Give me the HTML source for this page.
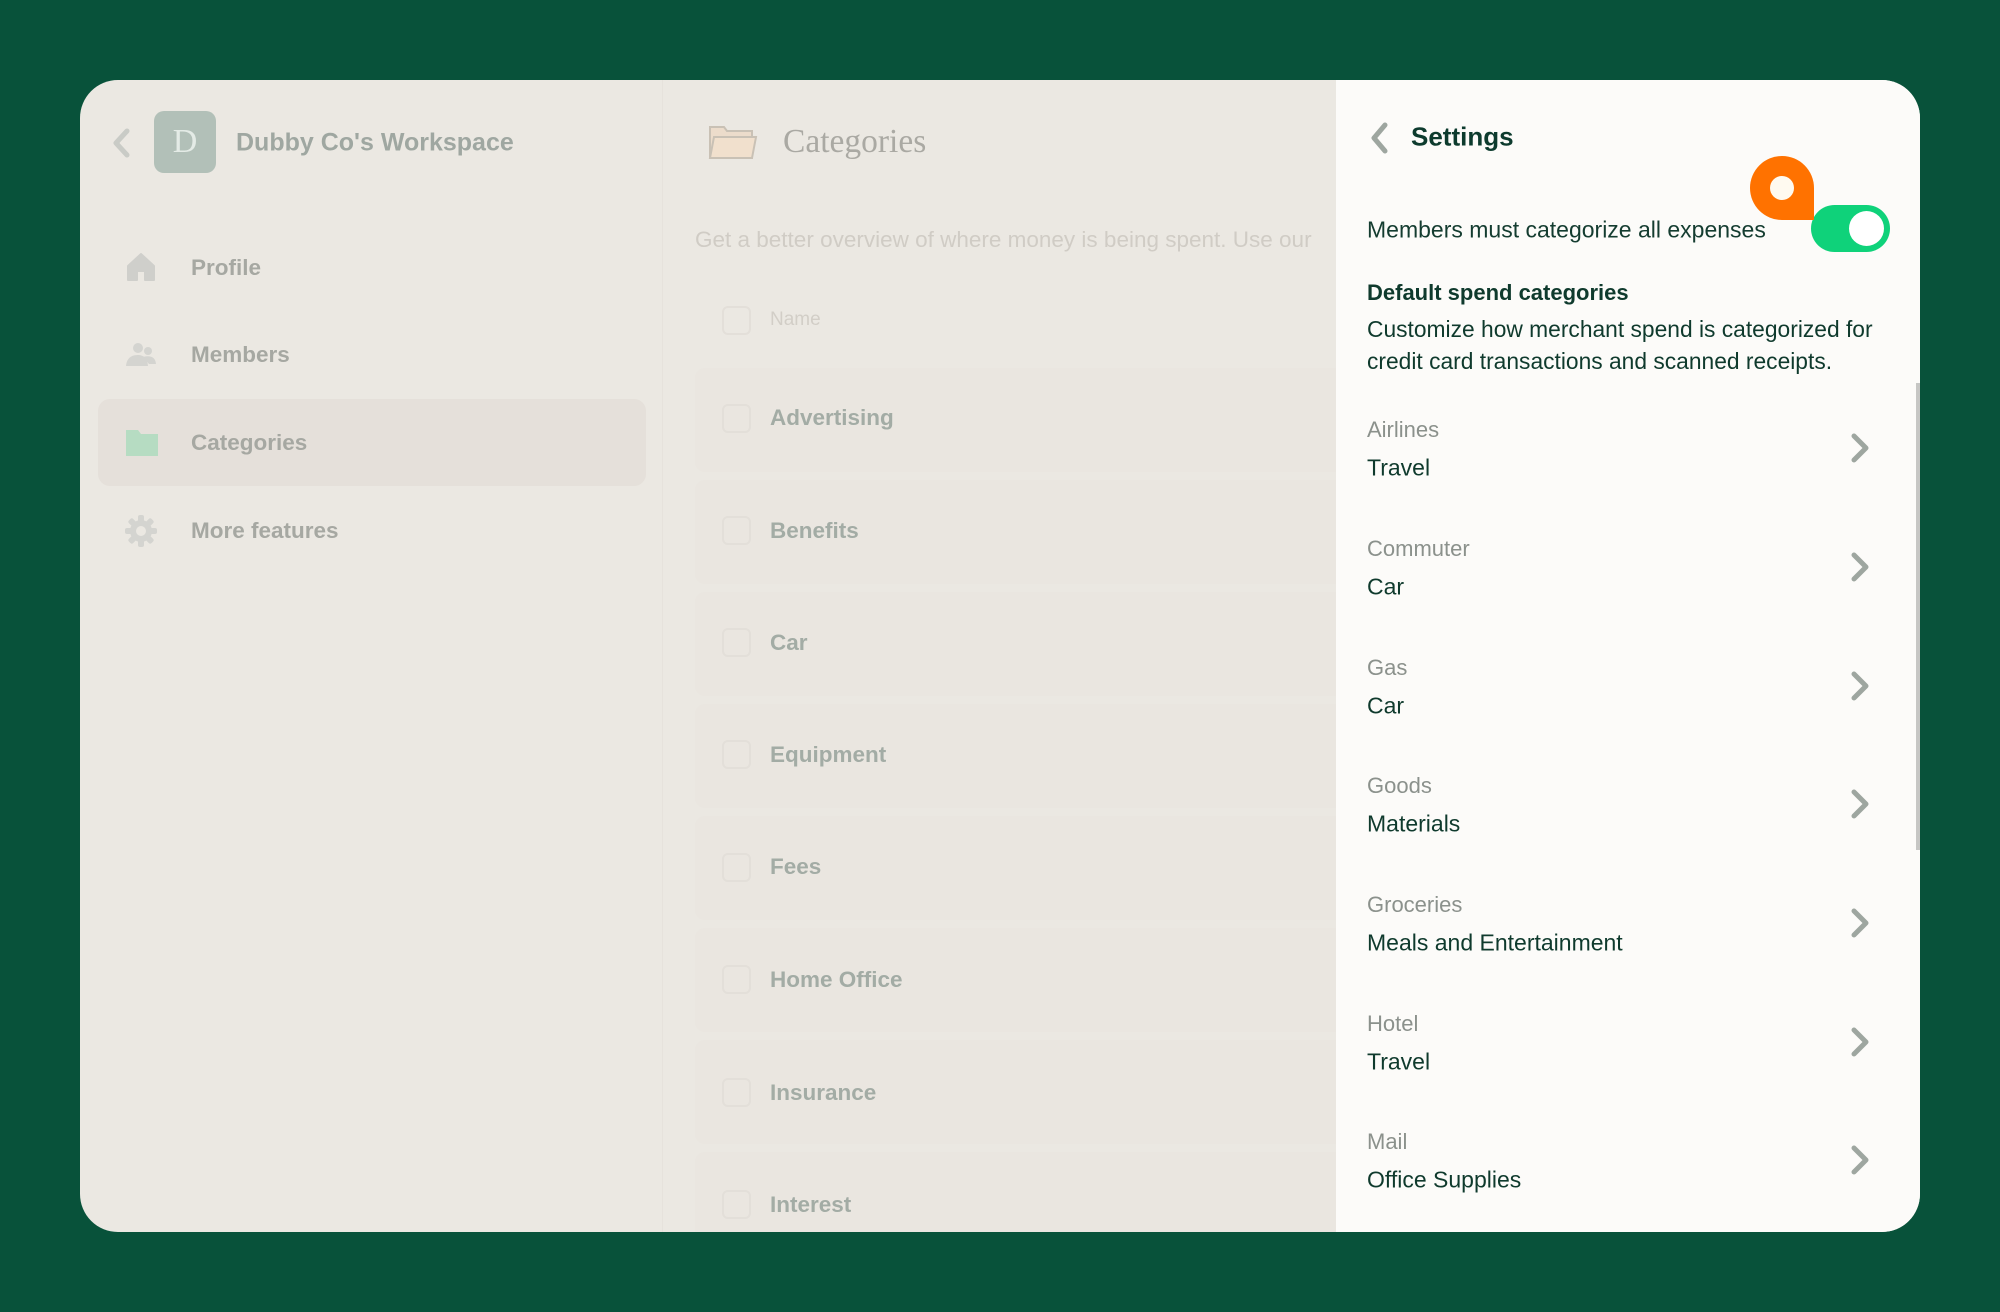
<!DOCTYPE html>
<html><head><meta charset="utf-8"><style>
*{box-sizing:border-box;margin:0;padding:0}
body{width:2000px;height:1312px;background:#08523a;font-family:"Liberation Sans",sans-serif;position:relative;overflow:hidden}
.card{position:absolute;left:80px;top:80px;width:1840px;height:1152px;border-radius:38px;overflow:hidden;background:#ebe8e2}
.side{position:absolute;left:0;top:0;width:583px;height:1152px;border-right:1px solid #e6e2dc}
.abs{position:absolute}
.nav{position:absolute;left:111px;font-size:22.5px;font-weight:bold;color:#a6a8a2;transform:translateY(-50%)}
.mid{position:absolute;left:583px;top:0;width:673px;height:1152px}
.row{position:absolute;left:32px;width:660px;height:104px;background:#eae6e0;border-radius:10px}
.cb{position:absolute;left:59px;width:29px;height:29px;border:2px solid #e3dfd9;border-radius:6px}
.rl{position:absolute;left:107px;font-size:22.5px;font-weight:bold;color:#a3aca5;transform:translateY(-50%)}
.right{position:absolute;left:1256px;top:0;width:584px;height:1152px;background:#fcfbf9}
.lab{position:absolute;left:31px;font-size:22px;color:#8b918c;transform:translateY(-50%)}
.val{position:absolute;left:31px;font-size:23px;color:#0f3a2d;transform:translateY(-50%)}
.chev{position:absolute;left:512px}
</style></head><body>
<div class="card">
 <div class="side">
  <svg class="abs" style="left:30px;top:48px" width="22" height="30"><path d="M17 3 L6 15 L17 27" stroke="#c9cbc6" stroke-width="5" fill="none" stroke-linecap="round" stroke-linejoin="round"/></svg>
  <div class="abs" style="left:74px;top:31px;width:62px;height:62px;border-radius:10px;background:#b2c0b8;color:#e4ebe6;font-family:'Liberation Serif',serif;font-size:34px;text-align:center;line-height:62px">D</div>
  <div class="abs" style="left:156px;top:63px;transform:translateY(-50%);font-size:25px;font-weight:bold;color:#9fa7a1">Dubby Co's Workspace</div>
  <svg class="abs" style="left:46px;top:172px" width="30" height="30"><path d="M2 14 L15 2 L28 14 V28 H19 V19 H11 V28 H2Z" fill="#cfcfcb" stroke="#cfcfcb" stroke-width="2" stroke-linejoin="round"/></svg>
  <div class="nav" style="top:188px">Profile</div>
  <svg class="abs" style="left:45px;top:262px" width="32" height="26"><circle cx="13" cy="6" r="5" fill="#d4d4d0"/><circle cx="23" cy="9" r="4" fill="#d4d4d0"/><path d="M1 24 Q2 13 13 13 Q22 13 23 24Z" fill="#d4d4d0"/><path d="M18 15 Q30 12 31 22 H24Z" fill="#d4d4d0"/></svg>
  <div class="nav" style="top:275px">Members</div>
  <div class="abs" style="left:18px;top:319px;width:548px;height:87px;border-radius:12px;background:#e5e0da"></div>
  <svg class="abs" style="left:46px;top:350px" width="32" height="26"><path d="M0 0 H12 L15 4 H32 V26 H0Z" fill="#b6dcc2"/></svg>
  <div class="nav" style="top:363px">Categories</div>
  <svg class="abs" style="left:45px;top:435px" width="32" height="32" viewBox="0 0 32 32"><g fill="#d4d4d0"><circle cx="16" cy="16" r="11"/><rect x="13" y="0" width="6" height="32" rx="2"/><rect x="13" y="0" width="6" height="32" rx="2" transform="rotate(45 16 16)"/><rect x="13" y="0" width="6" height="32" rx="2" transform="rotate(90 16 16)"/><rect x="13" y="0" width="6" height="32" rx="2" transform="rotate(135 16 16)"/></g><circle cx="16" cy="16" r="5" fill="#ebe8e2"/></svg>
  <div class="nav" style="top:451px">More features</div>
 </div>
 <div class="mid">
  <svg class="abs" style="left:45px;top:45px" width="50" height="36"><path d="M2 2 H16 L19 6 H44 V33 H2Z" fill="#ecdccb" stroke="#c9c1b5" stroke-width="2"/><path d="M2 33 L6 12 H48 L44 33Z" fill="#f1e0cd" stroke="#c9c1b5" stroke-width="2"/></svg>
  <div class="abs" style="left:120px;top:62px;transform:translateY(-50%);font-family:'Liberation Serif',serif;font-size:33.5px;color:#aaa9a3">Categories</div>
  <div class="abs" style="left:32px;top:160px;transform:translateY(-50%);font-size:22.5px;color:#d0ccc5;white-space:nowrap">Get a better overview of where money is being spent. Use our</div>
  <div class="cb" style="top:226px"></div>
  <div class="abs" style="left:107px;top:240px;transform:translateY(-50%);font-size:19px;color:#d2cec7">Name</div>
  <div class="row" style="top:288px"></div><div class="cb" style="top:324px"></div><div class="rl" style="top:338px">Advertising</div>
  <div class="row" style="top:400px"></div><div class="cb" style="top:436px"></div><div class="rl" style="top:451px">Benefits</div>
  <div class="row" style="top:512px"></div><div class="cb" style="top:548px"></div><div class="rl" style="top:563px">Car</div>
  <div class="row" style="top:624px"></div><div class="cb" style="top:660px"></div><div class="rl" style="top:675px">Equipment</div>
  <div class="row" style="top:736px"></div><div class="cb" style="top:773px"></div><div class="rl" style="top:787px">Fees</div>
  <div class="row" style="top:848px"></div><div class="cb" style="top:885px"></div><div class="rl" style="top:900px">Home Office</div>
  <div class="row" style="top:960px"></div><div class="cb" style="top:998px"></div><div class="rl" style="top:1013px">Insurance</div>
  <div class="row" style="top:1072px"></div><div class="cb" style="top:1110px"></div><div class="rl" style="top:1125px">Interest</div>
 </div>
 <div class="right">
  <svg class="abs" style="left:33px;top:42px" width="22" height="32"><path d="M16 3 L5 16 L16 29" stroke="#9ea6a0" stroke-width="5" fill="none" stroke-linecap="round" stroke-linejoin="round"/></svg>
  <div class="abs" style="left:75px;top:57px;transform:translateY(-50%);font-size:26px;font-weight:bold;color:#0d3b2e">Settings</div>
  <div class="abs" style="left:31px;top:150px;transform:translateY(-50%);font-size:23px;color:#143c30">Members must categorize all expenses</div>
  <div class="abs" style="left:475px;top:125px;width:79px;height:47px;border-radius:24px;background:#0fd27a"></div>
  <div class="abs" style="left:513px;top:131px;width:35px;height:35px;border-radius:50%;background:#fff"></div>
  <div class="abs" style="left:414px;top:76px;width:64px;height:64px;border-radius:32px 32px 0 32px;background:#ff7200"></div>
  <div class="abs" style="left:434px;top:96px;width:24px;height:24px;border-radius:50%;background:#fffaf0"></div>
  <div class="abs" style="left:31px;top:213px;transform:translateY(-50%);font-size:22px;font-weight:bold;color:#0f3a2d">Default spend categories</div>
  <div class="abs" style="left:31px;top:233px;width:545px;font-size:22.8px;line-height:32px;color:#0f3a2d">Customize how merchant spend is categorized for credit card transactions and scanned receipts.</div>
  <div class="abs" style="left:580px;top:303px;width:4px;height:467px;background:#c6c6c4"></div>

  <div class="lab" style="top:350px">Airlines</div><div class="val" style="top:388px">Travel</div>
  <svg class="chev" style="top:352px" width="26" height="32"><path d="M6 4 L18 16 L6 28" stroke="#9ea6a0" stroke-width="5" fill="none" stroke-linecap="round" stroke-linejoin="round"/></svg>
  <div class="lab" style="top:469px">Commuter</div><div class="val" style="top:507px">Car</div>
  <svg class="chev" style="top:471px" width="26" height="32"><path d="M6 4 L18 16 L6 28" stroke="#9ea6a0" stroke-width="5" fill="none" stroke-linecap="round" stroke-linejoin="round"/></svg>
  <div class="lab" style="top:588px">Gas</div><div class="val" style="top:626px">Car</div>
  <svg class="chev" style="top:590px" width="26" height="32"><path d="M6 4 L18 16 L6 28" stroke="#9ea6a0" stroke-width="5" fill="none" stroke-linecap="round" stroke-linejoin="round"/></svg>
  <div class="lab" style="top:706px">Goods</div><div class="val" style="top:744px">Materials</div>
  <svg class="chev" style="top:708px" width="26" height="32"><path d="M6 4 L18 16 L6 28" stroke="#9ea6a0" stroke-width="5" fill="none" stroke-linecap="round" stroke-linejoin="round"/></svg>
  <div class="lab" style="top:825px">Groceries</div><div class="val" style="top:863px">Meals and Entertainment</div>
  <svg class="chev" style="top:827px" width="26" height="32"><path d="M6 4 L18 16 L6 28" stroke="#9ea6a0" stroke-width="5" fill="none" stroke-linecap="round" stroke-linejoin="round"/></svg>
  <div class="lab" style="top:944px">Hotel</div><div class="val" style="top:982px">Travel</div>
  <svg class="chev" style="top:946px" width="26" height="32"><path d="M6 4 L18 16 L6 28" stroke="#9ea6a0" stroke-width="5" fill="none" stroke-linecap="round" stroke-linejoin="round"/></svg>
  <div class="lab" style="top:1062px">Mail</div><div class="val" style="top:1100px">Office Supplies</div>
  <svg class="chev" style="top:1064px" width="26" height="32"><path d="M6 4 L18 16 L6 28" stroke="#9ea6a0" stroke-width="5" fill="none" stroke-linecap="round" stroke-linejoin="round"/></svg>
 </div>
</div>
</body></html>
